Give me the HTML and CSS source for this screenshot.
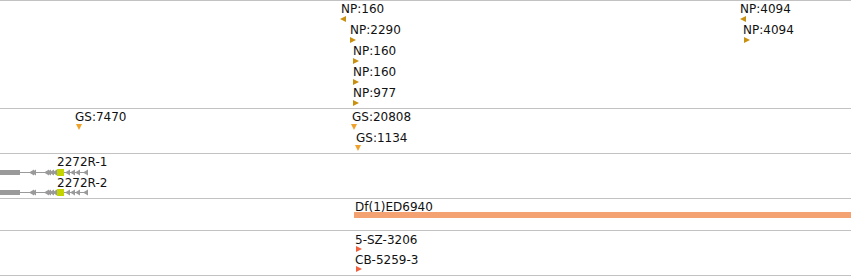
FILE: index.html
```html
<!DOCTYPE html>
<html lang="en">
<head>
    <meta charset="UTF-8">
    <title>Genome tracks</title>
    <link rel="stylesheet" href="styles.css">
</head>
<body>
    <div class="tracks">
        <!-- NP insertions -->
        <div class="track track-np">
            <span class="label" style="left:341px;top:1px">NP:160</span>
            <span class="tri tri-left np" style="left:340px;top:15px"></span>
            <span class="label" style="left:350px;top:22px">NP:2290</span>
            <span class="tri tri-right np" style="left:350px;top:36px"></span>
            <span class="label" style="left:353px;top:43px">NP:160</span>
            <span class="tri tri-right np" style="left:353px;top:57px"></span>
            <span class="label" style="left:353px;top:64px">NP:160</span>
            <span class="tri tri-right np" style="left:353px;top:78px"></span>
            <span class="label" style="left:353px;top:85px">NP:977</span>
            <span class="tri tri-right np" style="left:353px;top:99px"></span>
            <span class="label" style="left:740px;top:1px">NP:4094</span>
            <span class="tri tri-left np" style="left:740px;top:15px"></span>
            <span class="label" style="left:743px;top:22px">NP:4094</span>
            <span class="tri tri-right np" style="left:744px;top:36px"></span>
        </div>

        <!-- GS insertions -->
        <div class="track track-gs">
            <span class="label" style="left:75px;top:1px">GS:7470</span>
            <span class="tri tri-down gs" style="left:76px;top:15px"></span>
            <span class="label" style="left:352px;top:1px">GS:20808</span>
            <span class="tri tri-down gs" style="left:351px;top:15px"></span>
            <span class="label" style="left:356px;top:22px">GS:1134</span>
            <span class="tri tri-down gs" style="left:355px;top:36px"></span>
        </div>

        <!-- Gene models -->
        <div class="track track-gene">
            <span class="label" style="left:57px;top:1px">2272R-1</span>
            <svg class="gene" style="top:15px" width="90" height="7" viewBox="0 0 90 7">
                <line x1="20" y1="3.5" x2="87" y2="3.5" stroke="#9a9a9a" stroke-width="1"/>
                <rect x="0" y="1" width="20" height="5" fill="#9a9a9a"/>
                <g fill="#9a9a9a">
                    <polygon points="34,0.5 29,3.5 34,6.5"/>
                    <polygon points="36,0.5 31,3.5 36,6.5"/>
                    <polygon points="49,0.5 44,3.5 49,6.5"/>
                    <polygon points="51,0.5 46,3.5 51,6.5"/>
                    <polygon points="54,0.5 49,3.5 54,6.5"/>
                    <polygon points="57,0.5 52,3.5 57,6.5"/>
                    <polygon points="70,0.5 65,3.5 70,6.5"/>
                    <polygon points="75,0.5 70,3.5 75,6.5"/>
                    <polygon points="80,0.5 75,3.5 80,6.5"/>
                    <polygon points="88,0.5 83,3.5 88,6.5"/>
                </g>
                <rect x="57" y="0" width="7" height="7" fill="#c3d400"/>
            </svg>
            <span class="label" style="left:57px;top:22px">2272R-2</span>
            <svg class="gene" style="top:35px" width="90" height="7" viewBox="0 0 90 7">
                <line x1="20" y1="3.5" x2="87" y2="3.5" stroke="#9a9a9a" stroke-width="1"/>
                <rect x="0" y="1" width="20" height="5" fill="#9a9a9a"/>
                <g fill="#9a9a9a">
                    <polygon points="34,0.5 29,3.5 34,6.5"/>
                    <polygon points="36,0.5 31,3.5 36,6.5"/>
                    <polygon points="49,0.5 44,3.5 49,6.5"/>
                    <polygon points="51,0.5 46,3.5 51,6.5"/>
                    <polygon points="54,0.5 49,3.5 54,6.5"/>
                    <polygon points="57,0.5 52,3.5 57,6.5"/>
                    <polygon points="70,0.5 65,3.5 70,6.5"/>
                    <polygon points="75,0.5 70,3.5 75,6.5"/>
                    <polygon points="80,0.5 75,3.5 80,6.5"/>
                    <polygon points="88,0.5 83,3.5 88,6.5"/>
                </g>
                <rect x="57" y="0" width="7" height="7" fill="#c3d400"/>
            </svg>
        </div>

        <!-- Deficiencies -->
        <div class="track track-df">
            <span class="label" style="left:355px;top:1px">Df(1)ED6940</span>
            <span class="bar" style="left:354px;top:13px"></span>
        </div>

        <!-- Other insertions -->
        <div class="track track-ins">
            <span class="label" style="left:355px;top:2px">5-SZ-3206</span>
            <span class="tri tri-right ins" style="left:356px;top:15px"></span>
            <span class="label" style="left:355px;top:22px">CB-5259-3</span>
            <span class="tri tri-right ins" style="left:356px;top:35px"></span>
        </div>
    </div>
</body>
</html>
```

FILE: styles.css
```css
/* Page */
body {
    margin: 0;
    background-color: #fff;
    font-family: 'DejaVu Sans', Verdana, sans-serif;
    font-size: 12px;
    color: #111;
}

/* Track stack */
.tracks {
    width: 851px;
    display: flex;
    flex-direction: column;
    border-bottom: 1px solid #c2c2c2;
}

.track {
    position: relative;
    border-top: 1px solid #c2c2c2;
    overflow: hidden;
}

.track-np { height: 107px; }
.track-gs { height: 44px; }
.track-gene { height: 44px; }
.track-df { height: 31px; }
.track-ins { height: 44px; }

/* Feature labels */
.label {
    position: absolute;
    line-height: 14px;
    white-space: nowrap;
}

/* Insertion markers */
.tri {
    position: absolute;
    width: 6px;
    height: 6px;
    background-color: currentColor;
}

.tri-left { clip-path: polygon(100% 0, 0 50%, 100% 100%); }
.tri-right { clip-path: polygon(0 0, 100% 50%, 0 100%); }
.tri-down { clip-path: polygon(0 0, 100% 0, 50% 100%); }

.np { color: #c98f0e; }
.gs { color: #f0a22a; }
.ins { color: #f2603e; }

/* Gene models */
.gene {
    position: absolute;
    left: 0;
    display: block;
}

/* Deficiency bar */
.bar {
    position: absolute;
    right: 0;
    height: 6px;
    background-color: #f5a273;
}
```
